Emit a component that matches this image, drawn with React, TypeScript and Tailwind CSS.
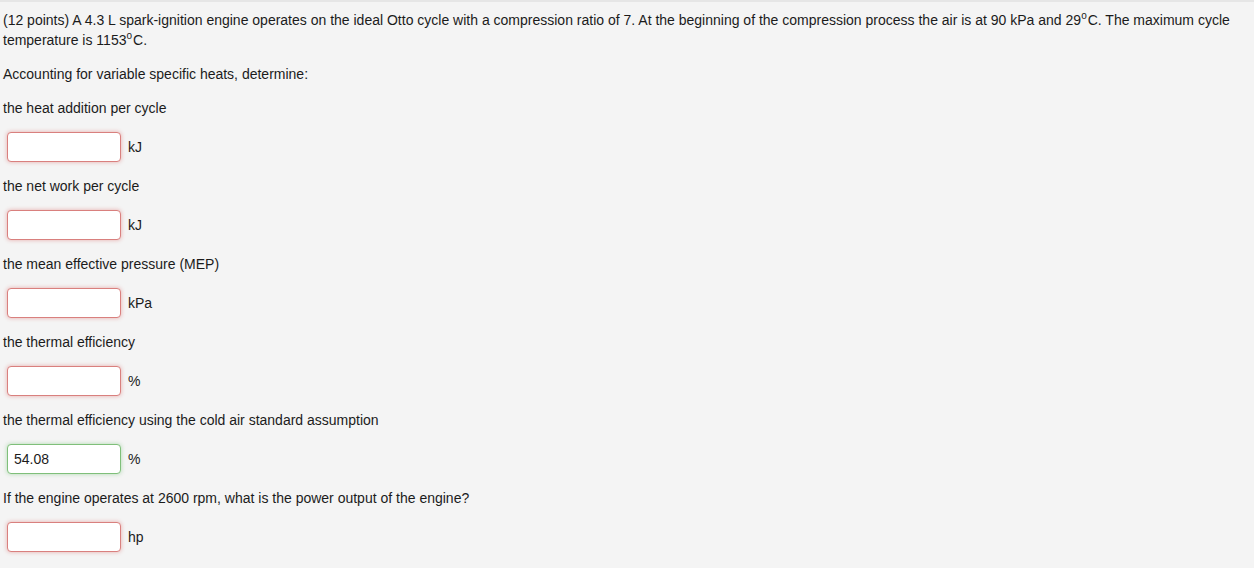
import React from "react";

const rows: { label: string; unit: string; value?: string; ok?: boolean }[] = [
  { label: "the heat addition per cycle", unit: "kJ" },
  { label: "the net work per cycle", unit: "kJ" },
  { label: "the mean effective pressure (MEP)", unit: "kPa" },
  { label: "the thermal efficiency", unit: "%" },
  { label: "the thermal efficiency using the cold air standard assumption", unit: "%", value: "54.08", ok: true },
  { label: "If the engine operates at 2600 rpm, what is the power output of the engine?", unit: "hp" },
];

function Deg() {
  return <span className="inline-block text-[10px] leading-[10px] align-top relative top-[1px] mr-[1px]">o</span>;
}

export default function App() {
  return (
    <div
      className="w-[1254px] h-[568px] overflow-hidden bg-[#f4f4f4] border-t-2 border-[#e6e6e6] text-[14px] leading-[20px] text-[#1b1b1b]"
      style={{ fontFamily: '"Liberation Sans", Arial, sans-serif' }}
    >
      <div className="pl-[3px] pr-[14px] pt-[8px]">
        <p>
          (12 points) A 4.3 L spark-ignition engine operates on the ideal Otto cycle with a compression ratio of 7. At the
          beginning of the compression process the air is at 90 kPa and 29<Deg />C. The maximum cycle temperature is 1153
          <Deg />C.
        </p>
        <p className="mt-[14px]">Accounting for variable specific heats, determine:</p>
        {rows.map((r, i) => (
          <div key={i}>
            <p className="mt-[14px]">{r.label}</p>
            <div className="mt-[14px] flex items-center">
              <div
                className={
                  "ml-[4px] w-[114px] h-[30px] rounded-[4px] bg-white border flex items-center px-[6px] " +
                  (r.ok
                    ? "border-[#7fbf7a] shadow-[0_0_4px_rgba(92,184,92,0.45)]"
                    : "border-[#d9807e] shadow-[0_0_4px_rgba(217,83,79,0.45)]")
                }
              >
                <span className="text-[14px] text-[#1b1b1b]">{r.value ?? ""}</span>
              </div>
              <span className="ml-[7px]">{r.unit}</span>
            </div>
          </div>
        ))}
      </div>
    </div>
  );
}
